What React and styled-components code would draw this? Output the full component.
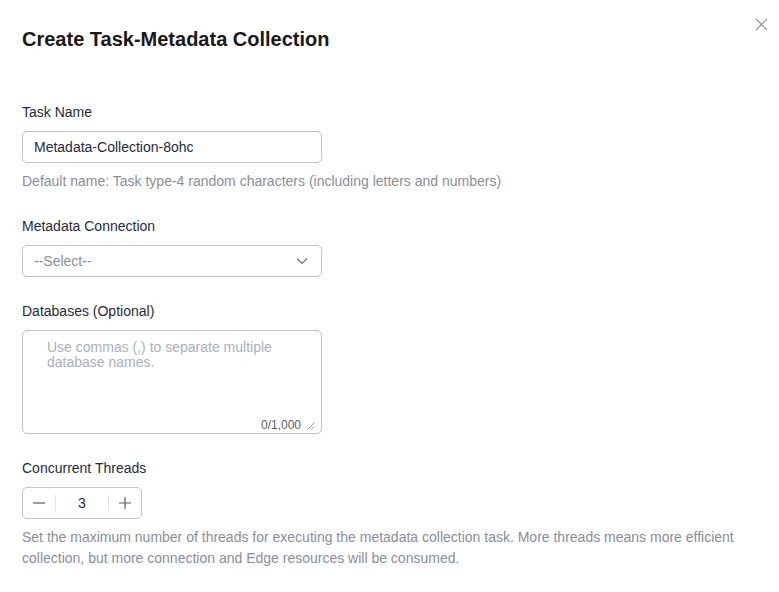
import React from 'react';
import styled, { createGlobalStyle } from 'styled-components';

const GlobalStyle = createGlobalStyle`
	body {
		margin: 0;
		background: #ffffff;
		font-family: "Liberation Sans", Arial, sans-serif;
	}
`;

const Dialog = styled.div`
	position: relative;
	width: 779px;
	height: 592px;
	box-sizing: border-box;
	padding: 27px 22px 0;
	background: #ffffff;
`;

const Title = styled.h2`
	margin: 0 0 50px;
	font-size: 20px;
	line-height: 24px;
	font-weight: bold;
	color: #191919;
`;

const CloseButton = styled.button`
	position: absolute;
	top: 17px;
	right: 11px;
	width: 14px;
	height: 14px;
	padding: 0;
	border: none;
	background: none;
	display: flex;
	align-items: center;
	justify-content: center;
`;

const FormItem = styled.div`
	display: flex;
	flex-direction: column;
	align-items: flex-start;
	margin-bottom: 23px;
`;

const Label = styled.label`
	font-size: 14px;
	line-height: 22px;
	color: #252b3a;
	margin-bottom: 8px;
`;

const InputBox = styled.div`
	width: 300px;
	height: 32px;
	box-sizing: border-box;
	border: 1px solid #c2c4c8;
	border-radius: 5px;
	padding: 0 11px;
	display: flex;
	align-items: center;
	justify-content: space-between;
	font-size: 14px;
	color: ${(p) => (p.$muted ? '#8a8e99' : '#252b3a')};
`;

const Help = styled.div`
	margin-top: 8px;
	font-size: 14px;
	line-height: 21px;
	color: #8a8e99;
	max-width: 720px;
`;

const TextArea = styled.div`
	position: relative;
	width: 300px;
	height: 104px;
	box-sizing: border-box;
	border: 1px solid #c2c4c8;
	border-radius: 5px;
	padding: 9px 24px;
	font-size: 14px;
	line-height: 15px;
	color: #adb0b8;
`;

const Counter = styled.div`
	position: absolute;
	right: 6px;
	bottom: 0;
	display: flex;
	align-items: center;
	gap: 6px;
	font-size: 12px;
	color: #575d6c;
`;

const Stepper = styled.div`
	width: 120px;
	height: 32px;
	box-sizing: border-box;
	border: 1px solid #c2c4c8;
	border-radius: 5px;
	display: flex;
	align-items: center;
`;

const StepButton = styled.span`
	width: 32px;
	height: 16px;
	display: flex;
	align-items: center;
	justify-content: center;
	${(p) => (p.$side === 'left' ? 'border-right' : 'border-left')}: 1px solid #dfe1e6;
`;

const StepValue = styled.span`
	flex: 1;
	text-align: center;
	font-size: 14px;
	color: #252b3a;
`;

const App = () => {
	return (
		<>
			<GlobalStyle />
			<Dialog>
				<Title>Create Task-Metadata Collection</Title>
				<CloseButton>
					<svg width="13" height="13" viewBox="0 0 13 13">
						<path d="M1 1L12 12M12 1L1 12" stroke="#8a8e99" strokeWidth="1.2" fill="none" />
					</svg>
				</CloseButton>

				<FormItem>
					<Label>Task Name</Label>
					<InputBox>Metadata-Collection-8ohc</InputBox>
					<Help>Default name: Task type-4 random characters (including letters and numbers)</Help>
				</FormItem>

				<FormItem>
					<Label>Metadata Connection</Label>
					<InputBox $muted>
						--Select--
						<svg width="12" height="8" viewBox="0 0 12 8" style={{ marginRight: 2 }}>
							<path d="M1 1.5L6 6.5L11 1.5" stroke="#6c707a" strokeWidth="1.2" fill="none" />
						</svg>
					</InputBox>
				</FormItem>

				<FormItem>
					<Label>Databases (Optional)</Label>
					<TextArea>
						Use commas (,) to separate multiple database names.
						<Counter>
							0/1,000
							<svg width="8" height="8" viewBox="0 0 8 8">
								<path d="M7 1L1 7M7 4.5L4.5 7" stroke="#8a8e99" strokeWidth="1" fill="none" />
							</svg>
						</Counter>
					</TextArea>
				</FormItem>

				<FormItem>
					<Label>Concurrent Threads</Label>
					<Stepper>
						<StepButton $side="left">
							<svg width="14" height="14" viewBox="0 0 14 14">
								<path d="M1 7H13" stroke="#575d6c" strokeWidth="1.2" />
							</svg>
						</StepButton>
						<StepValue>3</StepValue>
						<StepButton $side="right">
							<svg width="14" height="14" viewBox="0 0 14 14">
								<path d="M1 7H13M7 1V13" stroke="#575d6c" strokeWidth="1.2" />
							</svg>
						</StepButton>
					</Stepper>
					<Help>
						Set the maximum number of threads for executing the metadata collection task. More threads means more
						efficient collection, but more connection and Edge resources will be consumed.
					</Help>
				</FormItem>
			</Dialog>
		</>
	);
};

export default App;
